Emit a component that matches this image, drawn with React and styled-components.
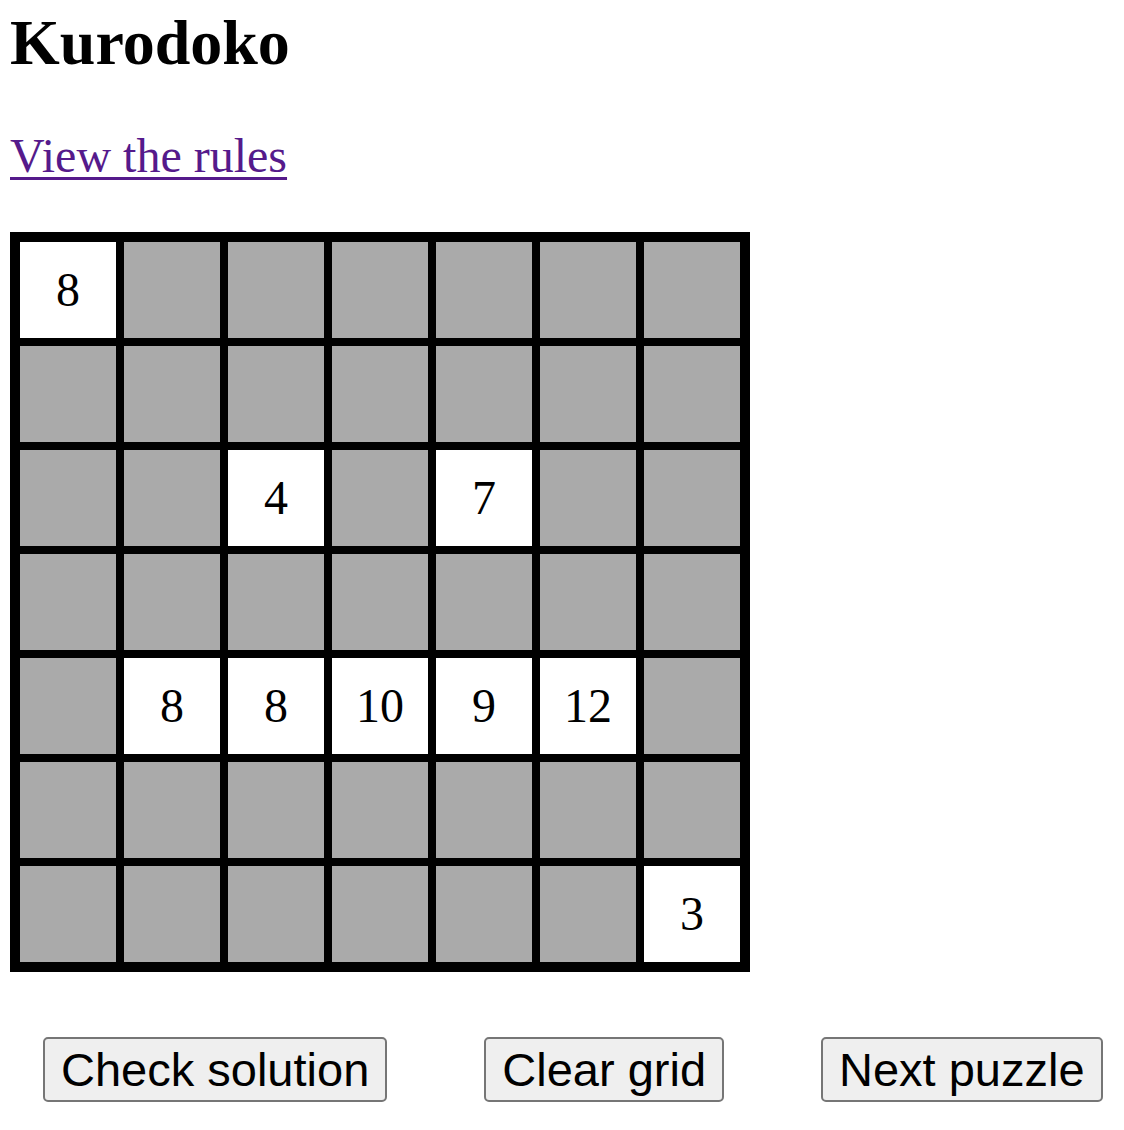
import React from "react";
import styled, { createGlobalStyle } from "styled-components";

const GlobalStyle = createGlobalStyle`
  body {
    margin: 0;
    padding: 6px 10px;
    background: #fff;
    font-family: "Liberation Serif", "Times New Roman", serif;
    color: #000;
  }
`;

const Title = styled.h1`
  margin: 0 0 48px;
  font-size: 64px;
  font-weight: 700;
  line-height: normal;
`;

const RulesLine = styled.p`
  margin: 0 0 49px;
  font-size: 48px;
  line-height: normal;
`;

const RulesLink = styled.a`
  color: #551a8b;
  text-decoration: underline;
  text-decoration-thickness: 3px;
  text-underline-offset: 5px;
`;

const Board = styled.div`
  display: grid;
  grid-template-columns: repeat(7, 96px);
  grid-auto-rows: 96px;
  gap: 8px;
  padding: 10px;
  background: #000;
  width: max-content;
`;

const Cell = styled.div`
  display: flex;
  align-items: center;
  justify-content: center;
  background: ${({ $clue }) => ($clue ? "#fff" : "#aaa")};
  font-size: 48px;
  line-height: 1;
`;

const Controls = styled.div`
  display: flex;
  gap: 97px;
  margin: 65px 0 0 33px;
`;

const Button = styled.button`
  font-family: "Liberation Sans", Arial, sans-serif;
  font-size: 47px;
  line-height: normal;
  color: #000;
  background: #efefef;
  border: 2px solid #767676;
  border-radius: 5px;
  padding: 3px 16px;
  cursor: pointer;
`;

const puzzle = [
  [8, 0, 0, 0, 0, 0, 0],
  [0, 0, 0, 0, 0, 0, 0],
  [0, 0, 4, 0, 7, 0, 0],
  [0, 0, 0, 0, 0, 0, 0],
  [0, 8, 8, 10, 9, 12, 0],
  [0, 0, 0, 0, 0, 0, 0],
  [0, 0, 0, 0, 0, 0, 3],
];

const App = () => {
  return (
    <>
      <GlobalStyle />
      <Title>Kurodoko</Title>
      <RulesLine>
        <RulesLink href="#rules">View the rules</RulesLink>
      </RulesLine>
      <Board>
        {puzzle.map((row, r) =>
          row.map((v, c) => (
            <Cell key={`${r}-${c}`} $clue={v > 0}>
              {v > 0 ? v : ""}
            </Cell>
          ))
        )}
      </Board>
      <Controls>
        <Button>Check solution</Button>
        <Button>Clear grid</Button>
        <Button>Next puzzle</Button>
      </Controls>
    </>
  );
};

export default App;
